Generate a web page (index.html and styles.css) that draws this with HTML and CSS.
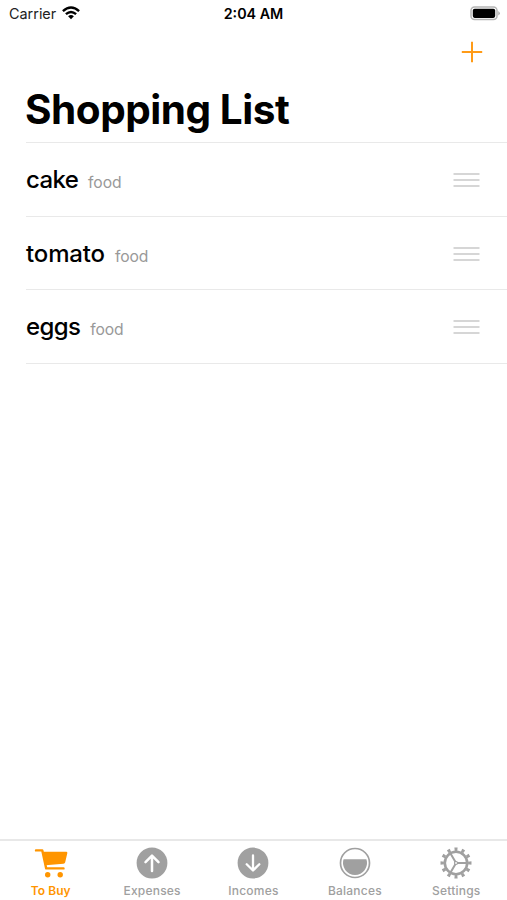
FILE: index.html
```html
<!DOCTYPE html>
<html lang="en">
<head>
<meta charset="utf-8">
<title>Shopping List</title>
<link rel="stylesheet" href="styles.css">
</head>
<body>
<div class="app">
  <header class="status">
    <div class="carrier"><span>Carrier</span>
      <svg width="18" height="14" viewBox="0 0 18 14" fill="none" stroke="#000" stroke-width="2.4"><path d="M.9 5.2Q9-2.2 17.1 5.2M3.9 8.2Q9 3.6 14.1 8.2"/><path d="M6.1 10.2Q9 7.8 11.9 10.2L9 13.2Z" fill="#000" stroke="none"/></svg>
    </div>
    <time class="clock">2:04 AM</time>
    <svg class="battery" width="30" height="15" viewBox="0 0 30 15"><rect x="1" y="1" width="26" height="12.6" rx="3.5" fill="#fff" stroke="#b5b5b5" stroke-width="1.5"/><rect x="2.8" y="2.7" width="22.4" height="9.2" rx="1.8"/><path d="M28.3 5Q31.4 7.3 28.3 9.6Z" fill="#aaa"/></svg>
  </header>
  <nav class="toolbar">
    <svg width="22" height="22" viewBox="0 0 22 22" stroke="#ff9b17" stroke-width="2"><path d="M11 .8V21.2M.8 11H21.2"/></svg>
  </nav>
  <h1>Shopping List</h1>
  <ul class="list">
    <li><span class="name cake">cake</span><span class="category">food</span><svg class="grip" width="27" height="16" viewBox="0 0 27 16" stroke="#c9c9c9" stroke-width="1.7"><path d="M.5 2H26.5M.5 8H26.5M.5 14H26.5"/></svg></li>
    <li><span class="name tomato">tomato</span><span class="category">food</span><svg class="grip" width="27" height="16" viewBox="0 0 27 16" stroke="#c9c9c9" stroke-width="1.7"><path d="M.5 2H26.5M.5 8H26.5M.5 14H26.5"/></svg></li>
    <li><span class="name eggs">eggs</span><span class="category">food</span><svg class="grip" width="27" height="16" viewBox="0 0 27 16" stroke="#c9c9c9" stroke-width="1.7"><path d="M.5 2H26.5M.5 8H26.5M.5 14H26.5"/></svg></li>
  </ul>
  <nav class="tabs">
    <div class="tab active">
      <svg width="34" height="32" viewBox="0 0 34 32"><path d="M2 3.4H8.3L12.2 21.4H29.5" fill="none" stroke="currentColor" stroke-width="2.4" stroke-linecap="round" stroke-linejoin="round"/><path d="M8.8 4.8H32.2Q33.6 4.8 33.3 6.2L31.2 15.3Q30.9 16.6 29.5 16.8L11.5 18.2Z" fill="currentColor"/><circle cx="13.7" cy="27.7" r="2.7" fill="currentColor"/><circle cx="26.2" cy="27.7" r="2.7" fill="currentColor"/></svg>
      <span>To Buy</span>
    </div>
    <div class="tab">
      <svg width="32" height="32" viewBox="0 0 32 32"><circle cx="16" cy="16" r="15.4" fill="currentColor"/><path d="M16 24V9M9.5 15.2L16 8.7L22.5 15.2" fill="none" stroke="#fff" stroke-width="2.5" stroke-linecap="round" stroke-linejoin="round"/></svg>
      <span>Expenses</span>
    </div>
    <div class="tab">
      <svg width="32" height="32" viewBox="0 0 32 32"><circle cx="16" cy="16" r="15.4" fill="currentColor"/><path d="M16 8.5V23M9.7 17.2L16 23.5L22.3 17.2" fill="none" stroke="#fff" stroke-width="2.3" stroke-linecap="round" stroke-linejoin="round"/></svg>
      <span>Incomes</span>
    </div>
    <div class="tab">
      <svg width="32" height="32" viewBox="0 0 32 32"><circle cx="16" cy="16" r="14.5" fill="none" stroke="currentColor" stroke-width="1.7"/><path d="M4.6 12.2H27.4A12 12 0 1 1 4.6 12.2Z" fill="currentColor"/></svg>
      <span>Balances</span>
    </div>
    <div class="tab">
      <svg width="32" height="32" viewBox="0 0 32 32" fill="none" stroke="currentColor"><circle cx="16" cy="16" r="11.2" stroke-width="2.6"/><circle cx="16" cy="16" r="13.8" stroke-width="3.4" pathLength="120" stroke-dasharray="4.2 5.8" stroke-dashoffset="2.1"/><path d="M17 16H27M15.5 15.1L10.5 6.5M15.5 16.9L10.5 25.5" stroke-width="2"/><circle cx="16" cy="16" r="1.5" stroke-width="1.2"/></svg>
      <span>Settings</span>
    </div>
  </nav>
</div>
</body>
</html>
```

FILE: styles.css
```css
* { box-sizing: border-box; }
body { margin: 0; background: #fff; color: #000; font-family: Inter, "Liberation Sans", sans-serif; }
svg { display: block; flex: none; }
.app { height: 900px; display: flex; flex-direction: column; overflow: hidden; }
.status { height: 28px; display: grid; grid-template-columns: 1fr auto 1fr; align-items: center; padding: 0 7px 2px 9px; font-size: 14.4px; }
.carrier { display: flex; align-items: center; gap: 6px; color: #222; }
.clock { font-weight: 600; font-size: 14.3px; transform: translateX(-1px); }
.battery { justify-self: end; }
.toolbar { height: 48px; display: flex; justify-content: flex-end; align-items: center; padding-right: 24px; }
h1 { height: 66px; margin: 0; padding-left: 25px; font-size: 40.5px; line-height: 67px; font-weight: 700; letter-spacing: -.46px; white-space: nowrap; }
.list { list-style: none; margin: 0 0 0 26px; padding: 0; border-top: 1px solid #e9e9e9; flex: 1; }
.list li { height: 73.7px; border-bottom: 1px solid #e9e9e9; display: flex; align-items: baseline; padding: 22px 27px 0 0; line-height: 30px; }
.name { font-size: 24px; font-weight: 500; }
.cake, .eggs { letter-spacing: -.65px; }
.tomato { letter-spacing: -.15px; }
.category { margin-left: 10px; font-size: 15.7px; letter-spacing: -.1px; color: #999; }
.grip { margin-left: auto; align-self: flex-start; margin-top: 7px; }
.tabs { height: 61px; border-top: 2px solid #e8e8e8; display: grid; grid-template-columns: repeat(5, 1fr); }
.tab { display: flex; flex-direction: column; align-items: center; padding-top: 6px; color: #a0a0a0; font-size: 12px; line-height: 16px; font-weight: 500; letter-spacing: .22px; }
.tab span { margin-top: 4px; }
.active { color: #ff9500; }
.active span { font-weight: 600; letter-spacing: .05px; }
```
